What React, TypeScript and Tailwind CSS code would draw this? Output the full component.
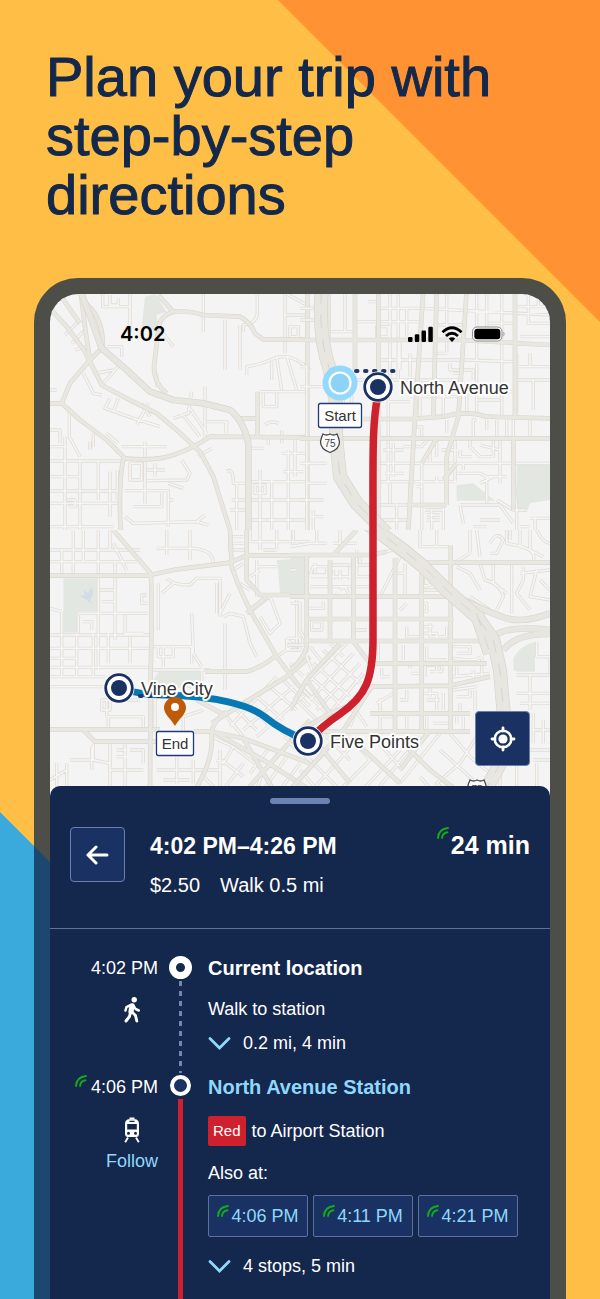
type Tile = {
  x: number;
  y: number;
  parks: string;
  minor: string;
  major: string;
  freeway: string;
  interstate: string;
};

// Street tiles are drawn at 3x and scaled down onto the map
const tiles: Tile[] = [
  {
    x: -20,
    y: -24,
    parks: "M345 80L335 175 385 182 380 135 410 125 375 72Z",
    minor:
      "M520 60V185M300 60V185M218 60V110H300M240 75V105H265V85M682 60V130Q680 160 640 165V185M765 60V250M840 135H765M780 170H805V200H780ZM650 315V290Q690 285 740 262Q790 250 840 300M740 262L755 360M770 258L800 360M725 275V330M690 365H835M700 370V410H740V370M585 150V300M630 165V300M160 310L190 370 215 375M195 310L250 300M215 345L265 290M240 385L225 415 310 445 390 470M265 385L250 425M335 400L360 440M455 430L510 500M480 415L530 490M430 445L475 430 485 365M320 465L355 400M525 350V500M588 455V490M530 455H590V490M60 573H275M60 620H150M60 663H275M60 700H270M60 770H250M105 500V780M150 570V780M118 420V500L150 560M205 570V690M240 605V740M262 600V690M60 480H90V520M60 530H110M110 690H135V710H115M275 530H410M345 515V700M300 580V630H335V580ZM285 662H415V770M310 710H395V670M350 600H405M375 580V620M455 570L480 610 470 630 350 632M415 640L460 655M285 740L310 760 500 755 525 735M500 755L535 765M430 690H415M655 635H840M655 690H840M655 750H840M690 600V780M725 630V780M775 540V780M655 535H700M590 605Q610 590 610 640H650M600 720H650M605 690H650M755 550H830M760 605H820M675 645H705V670H675ZM705 465Q720 450 745 460M620 640V780M715 505V525M755 480V520M795 505V620M770 72L840 110M60 360H80M105 195L150 150M125 220L165 180M135 240L170 230M230 230H275V260M385 170L430 230M180 515V540M190 490V530M230 490L265 520M60 90L110 60M505 560L545 535M380 350V310",
    major:
      "M60 115L110 170 165 245 215 345 290 385 380 430 440 480 510 545 550 620 600 780M90 75L150 160M155 60V90Q165 180 180 270M155 90Q225 140 218 240M180 270L215 235M180 270L120 340 95 400H60M95 400L150 450 230 510 285 565M285 565Q370 575 430 555T540 500L840 502M280 565Q265 640 272 780M385 75L430 125Q385 140 385 180L372 290Q372 340 410 370M430 125Q470 120 520 135L630 140Q660 155 675 190L700 208H840M620 445H685M683 365V500M832 60V780",
    freeway:
      "M150 60L185 150 215 235 290 300 360 365 430 390 520 400 600 420Q640 450 655 520V780",
    interstate: "",
  },
  {
    x: 250,
    y: -24,
    parks: "M470 645L520 640 585 692H470ZM650 583H750V690L690 700 680 728 650 715Z",
    minor:
      "M0 290H20V780M0 580H80M0 690H70M20 640H80M35 740H70M40 720V780M0 350H90M0 150H50M85 90V185H160M0 115H50M135 72V185M160 155H360M235 115H370L750 135M235 270H500L640 275M165 330H480M205 95H240M295 60V330M270 60V330M320 115V200M440 60V250M405 165H490M530 60V430M560 60V210M605 60V440M685 60V160H750M650 110H750M565 160H650M530 180H605M650 250V430M650 290H750M690 250V290M650 330H750M700 330V420M440 250H400M450 280V300H520V330M460 310H490M470 365H640M500 340V430M530 390H600M330 250V320M300 215V300M265 330V440M265 395H330M330 380H480M360 330V440M430 380V440M250 540H310M235 580H750M265 505V640M280 520V620M235 635H470M310 530H365L385 505M365 580V780M390 540V580M410 505V560M425 540H470M235 705H430M270 640V700M235 750H320M290 700V780M430 705V780M440 580V700M465 505V640M510 505V530L540 560H580V505M480 540V560H515M540 525L600 540M600 505V640M470 610H540L560 620H620M560 620V700M540 640L580 620M590 690L640 720H680M640 600L650 720V780M480 705H600L640 760M375 720H430M380 735H420M380 750H420M395 720V780M480 705L490 760M540 750H600M520 770H560M690 745H750M705 740V780M660 770H690M620 450V505M560 450V480M590 450V505M530 450H520V505M640 440V505M690 450V500M265 450V505M340 470H365V500M440 450V490M660 200H750M715 72V110M265 170H230V200H265ZM155 300V440M130 390V440M255 610H310M330 640V700M350 650H365M490 600V580M410 620V640",
    major:
      "M0 210H480L750 225M165 60V300M235 60V780M370 60L345 440 325 780M410 60L400 440M500 60L475 440 440 560V705M645 60V440M190 447H330L430 440Q500 420 560 440L750 445M0 505H750M365 580L410 505M430 630L470 580M320 705H440M640 505V720M85 60V210",
    freeway: "",
    interstate: "M65 60C58 150 65 230 90 300L108 400V500L120 620 170 700 260 790",
  },
  {
    x: -20,
    y: 236,
    parks: "M100 145H205V245H145V308H100ZM385 425H510V475H410L370 450ZM740 90L830 85V190H750L745 130Z",
    minor:
      "M60 60H330M60 95H320M130 0V140M205 0V420M160 0V95M95 60V140M240 0V60M255 95V330M60 315H360M60 355H360M60 412H355M60 385H140M140 310V440M190 310V440M235 310V400M300 320V400M145 250H355M210 180H255M215 215H255M285 255V310H340M145 255V310M160 275H185V300M60 235L95 245M95 245V440M60 440H225M60 470H220M250 40L290 120M410 0V75M480 0V90M380 55H490Q550 60 550 100M410 145Q430 165 480 165L500 145H570V260M385 160V300M395 190L430 160M350 195H335V220H355M485 250L490 370 515 410M515 415V480M580 260L600 250 640 260 660 340 680 380M585 280V480M370 420H540M370 350H485V400M385 350V380H430V350H400V410M600 0V60H650M660 0V35H840M690 0V60M740 0V60M790 0V35M605 20H640M605 40H640M700 60H740M680 90V200M680 110H740M660 140L690 120M630 160L660 180M610 120L640 100M655 250L720 200 750 280 720 310 690 260M800 210V350L770 330V360H810V325H770M830 200V370M740 380L800 340M560 160V250M600 190L570 250M80 780V700M235 600V560H340V600M215 510V540H240V510ZM230 560V510H330M240 640V780M285 640V780M185 650V720M120 690H200M240 720H340M300 660H340V700M260 660H290M260 680H290M60 750L110 720M110 700V780M375 600V500M370 500H400M440 680V760M490 690V760M380 720H570V660M460 600V560L520 540M400 750H480M190 640V690L240 700M545 620L610 650 580 700 560 690M590 560L640 620M620 540L680 600M650 520L720 590M680 500L760 570M720 470L800 540M760 450L840 530M600 590L740 440M640 600L790 470M680 620L830 490M575 690L640 740M610 650L700 720 680 780M720 650L660 730M770 680L700 780M810 700L750 780M570 660V780M520 740L560 780M640 700L580 780M760 620L840 660M780 400L820 440",
    major:
      "M250 0L310 70 362 130Q368 200 362 420L360 780M60 137H350L440 118 600 98 650 76H840M600 0L605 110Q640 210 680 275L740 380 800 460 840 500M650 0V150L690 195H840M650 250L710 200M525 425H650Q700 410 740 375M60 598H390M490 605H545L640 625 840 700M160 600L195 635H380M590 545Q540 580 545 620 550 690 495 780M545 580Q640 520 770 440L840 380M500 510L575 550M550 605L700 690 840 780M640 625L730 780M840 570L740 680 650 780",
    freeway: "",
    interstate: "",
  },
  {
    x: 240,
    y: 236,
    parks: "M0 82H45V190H0ZM670 420V385Q690 345 735 335V425H680Z",
    minor:
      "M60 135H110V110H70ZM120 105H240M130 120V150M150 120V150M180 110V150M200 60V140H240M60 140H240M60 170H240M75 100V130M150 180Q165 160 175 190M0 0V50L60 40H110M80 0V40M130 40H200M150 0V60M55 235H100V215M65 275V300H95V275ZM140 205V190M190 300H230M0 220H30V300L45 330M0 345H40M190 225V250M210 100V75M270 70L310 60 350 90M330 80L270 200M345 100V200M320 130H345M400 130V180H480M400 170L440 160M400 220H410V245H400M330 240L350 220M420 280V320H470V290M400 310H440V330M400 290H430M350 290V320H390M340 345V390M410 350V390H470M490 350H540V370H500M490 385Q560 395 575 380M360 415V400M365 430H390M405 400V440M410 405H455V425H420M440 405V430M500 410V440M550 420V460M575 380V440M490 440L600 430M490 480L560 470M500 500H540V480M510 520V550M555 480V540M350 480V510H330M400 490H440V540M420 470V500M410 510H450M460 490V540M350 560V600M410 560V600M430 580H480M520 560V600M500 560V580M390 0V50H480M440 0V50M540 0V70M540 70L490 100M600 40Q620 0 640 30L620 70H600M560 0L570 80M650 0V40L700 50M690 0V50Q740 60 730 90M740 0Q760 40 780 40M720 0V60L760 80M665 100V250M570 100L585 150Q630 160 640 200L620 240M500 110L540 130 570 180M540 200L600 240M610 100V160L650 190M700 110V150L680 190 720 240M740 120L720 200 780 210M690 130L780 120M750 150L780 180M680 435H780M720 435V540M680 490H780M740 380H780V430M740 380V335M690 520H780M730 550V640M760 570V640M730 600H780M560 620L510 700 440 760 500 810M480 610L540 680 600 730M450 660L550 750M400 700L480 770M390 740L450 810M590 770V810M630 730V810M680 700V810M720 660H780M730 690H780M740 700V810M100 610L180 690M170 610L240 690M240 610L330 710M60 690L150 780M30 720L100 800M130 640L0 780M210 620L40 810M250 680L120 810M330 660L190 810M390 620L260 780M450 610L330 760M0 640L60 690M100 360L210 460M70 400L180 500M50 430L150 520M30 470L120 560M10 500L80 570M170 340L50 460M190 370L60 510M210 400L80 540M220 430L110 560M230 470L140 570M120 340L160 380M60 350L100 400M50 380L70 430M190 530L230 590M210 510L180 590M270 505V600M270 560H310M260 520L310 490M660 0V30M0 120H20M265 340V390M270 440H300M275 415V440",
    major:
      "M0 75H240L290 65M50 80V350Q40 390 0 420M120 90V335M190 75V335L240 400M315 85V600M395 110V600M482 45V600M390 98H780M0 200H480M50 267H490M40 333H570M250 400H590M240 470L480 467 600 440M240 550H540M70 605H540M130 75L200 0M0 540L50 450 150 340M50 450L120 550 190 520M0 620L120 550M245 470L160 600 0 780M330 630L420 720 500 780M200 640L330 760M90 650L180 760M420 600L330 720",
    freeway: "M510 205Q600 250 650 265T780 250M610 320Q650 285 780 300M640 360Q680 310 780 312",
    interstate: "M230 -20L340 60 400 110 470 180 560 260 610 330 630 420 642 560V680L570 810M560 250L600 370",
  },
];

function Streets() {
  return (
    <>
      {tiles.map((t) => (
        <svg
          key={`${t.x}:${t.y}`}
          x={t.x}
          y={t.y}
          width="300"
          height={t.y < 0 ? 260 : 270}
          viewBox={t.y < 0 ? "0 0 900 780" : "0 0 900 810"}
          fill="none"
          strokeLinejoin="round"
        >
          <path d={t.parks} fill="#e3e7e2" />
          <path d={t.minor} stroke="#e0ddd7" strokeWidth="10" />
          <path d={t.minor} stroke="#f6f5f4" strokeWidth="5" />
          <path d={t.major} stroke="#dbd8cf" strokeWidth="14" />
          <path d={t.major} stroke="#e9e7e1" strokeWidth="10" />
          <path d={t.freeway} stroke="#d8d5cb" strokeWidth="20" />
          <path d={t.freeway} stroke="#e8e6e0" strokeWidth="16" />
          <path d={t.interstate} stroke="#d8d4ca" strokeWidth="42" />
          <path d={t.interstate} stroke="#e8e6e1" strokeWidth="38" />
          <path d={t.interstate} stroke="#cfccc5" strokeWidth="2" strokeDasharray="40 34" />
        </svg>
      ))}
    </>
  );
}

function Shield({ x, y }: { x: number; y: number }) {
  return (
    <g transform={`translate(${x} ${y})`}>
      <path
        d="M-7-9Q-3.500-7 0-9 3.500-7 7-9 9-5 9.500-1 9.500 6 0 9.500-9.500 6-9.500-1-9-5-7-9Z"
        fill="#fafafa"
        stroke="#45474a"
        strokeWidth="1.300"
      />
      <text y="4" textAnchor="middle" fontSize="10" fill="#45474a">
        75
      </text>
    </g>
  );
}

function Stop({ x, y }: { x: number; y: number }) {
  return (
    <g transform={`translate(${x} ${y})`}>
      <circle r="15.500" fill="#fff" />
      <circle r="13.300" fill="#fff" stroke="#1a3263" strokeWidth="2.800" />
      <circle r="8" fill="#1a3263" />
    </g>
  );
}

function RouteMap() {
  return (
    <svg
      className="block w-full"
      viewBox="0 0 500 506"
      role="img"
      aria-label="Route map"
      fontFamily="'Liberation Sans', Arial, sans-serif"
    >
      <rect width="500" height="506" fill="#f5f4f4" />
      <Streets />
      <path d="M33 295l5 4 4-6 1 8-3 5 2 4-5-4-7-4 5-1z" fill="#d3dbe8" />

      <path
        d="M328 100C322 130 323 160 323 236V345C323 385 316 402 290 420Q272 432 258 447"
        fill="none"
        stroke="#cf202d"
        strokeWidth="7.500"
      />
      <path
        d="M69 394Q90 401 115 401C165 402 200 411 215 423Q232 437 258 447"
        fill="none"
        stroke="#0678b4"
        strokeWidth="7"
      />
      <g stroke="#1d3768" strokeWidth="4" strokeLinecap="round" strokeDasharray="1.500 7.500">
        <path d="M306 77H346" />
        <path d="M90 402H120" />
      </g>

      <circle cx="290" cy="89" r="17.500" fill="#92d9fb" />
      <circle cx="290" cy="89" r="10.500" fill="#8dd3f8" stroke="#fff" strokeWidth="2.200" />
      <Stop x={328} y={93} />
      <Stop x={69} y={394} />
      <Stop x={258} y={447} />
      <Shield x={280} y={149} />
      <Shield x={427} y={495} />

      <path
        d="M125 432C121 425 114 420 114 414A11 11 0 0 1 136 414C136 420 129 425 125 432Z"
        fill="#bf5b08"
      />
      <circle cx="125" cy="413" r="4" fill="#fff" />

      <g fontSize="18" fill="#333" stroke="#fff" strokeWidth="4" strokeLinejoin="round" paintOrder="stroke">
        <text x="350" y="100">North Avenue</text>
        <text x="91" y="401">Vine City</text>
        <text x="280" y="454">Five Points</text>
      </g>

      <g fill="#fff" stroke="#1d3a72" strokeWidth="1.300">
        <rect x="268.500" y="109.500" width="43" height="24" rx="2" />
        <rect x="106.500" y="437.500" width="37" height="24" rx="2" />
      </g>
      <g fontSize="15" fill="#333" textAnchor="middle">
        <text x="290" y="127">Start</text>
        <text x="125" y="455">End</text>
      </g>
    </svg>
  );
}

function StatusIcons() {
  return (
    <svg className="h-4 w-[98px]" viewBox="0 0 98 16" aria-hidden>
      <rect x="0" y="11" width="4.500" height="5" rx="1.200" />
      <rect x="6.800" y="8.300" width="4.500" height="7.700" rx="1.200" />
      <rect x="13.500" y="4.500" width="4.500" height="11.500" rx="1.200" />
      <rect x="20.300" y="0.800" width="4.500" height="15.200" rx="1.200" />
      <g fill="none" stroke="#000" strokeWidth="2.800">
        <path d="M34.500 6.300Q44 -2.800 53.500 6.300" />
        <path d="M38 10Q44 4.600 50 10" />
      </g>
      <path d="M40.800 12.500Q44 10 47.200 12.500L44 16Z" />
      <rect x="64.500" y="1" width="29.500" height="14" rx="4.500" fill="#fff" stroke="#8b8b8b" />
      <rect x="66.300" y="2.800" width="26" height="10.400" rx="3" />
      <path d="M95.500 5.500Q97.500 8 95.500 10.500Z" fill="#8b8b8b" />
    </svg>
  );
}

function LiveIcon({ className = "" }: { className?: string }) {
  return (
    <svg
      className={`size-3 shrink-0 ${className}`}
      viewBox="0 0 12 12"
      fill="none"
      stroke="#10ac1b"
      strokeWidth="1.900"
      strokeLinecap="round"
      aria-hidden
    >
      <path d="M1 11Q1.500 2 11 1" />
      <path d="M5 11Q5.500 6 10.500 5.200" />
    </svg>
  );
}

function WalkIcon() {
  return (
    <svg
      className="h-[26px] w-4"
      viewBox="0 0 16 26"
      fill="none"
      stroke="#fff"
      strokeWidth="2.900"
      strokeLinecap="round"
      strokeLinejoin="round"
      aria-hidden
    >
      <circle cx="10.200" cy="2.700" r="2.700" fill="#fff" stroke="none" />
      <path d="M6.500 8L2.500 10.200 1.500 13.500M9.500 8.500L11.500 12 14.800 13.500" strokeWidth="2.500" />
      <path d="M8 8.800L7 14.500" strokeWidth="5.200" />
      <path d="M6.500 15L5.500 19.500 2 24M7.500 14.500L11.500 18.500 12.800 24" />
    </svg>
  );
}

function TrainIcon() {
  return (
    <svg className="block h-[26px] w-4" viewBox="0 0 16 26" fill="#fff" aria-hidden>
      <path d="M5.500 0.500H10.500V2.500H5.500Z" />
      <path
        fillRule="evenodd"
        d="M4 2.200H12Q15 3.500 15 7V16.500Q15 20 12 20H4Q1 20 1 16.500V7Q1 3.500 4 2.200ZM5.500 3.800V5H10.500V3.800ZM3.200 7V12.500H12.800V7ZM4.500 14.700A1.500 1.500 0 1 0 4.500 17.700 1.500 1.500 0 1 0 4.500 14.700ZM11.500 14.700A1.500 1.500 0 1 0 11.500 17.700 1.500 1.500 0 1 0 11.500 14.700Z"
      />
      <path d="M4 20.500L1.200 25.200M12 20.500L14.800 25.200" stroke="#fff" strokeWidth="1.900" />
    </svg>
  );
}

function Details({ label }: { label: string }) {
  return (
    <button className="flex items-center gap-3 text-left leading-6">
      <svg className="h-[13px] w-[23px]" viewBox="0 0 23 13" fill="none" aria-hidden>
        <path d="M2 1.500L11.500 11 21 1.500" stroke="#90d8fb" strokeWidth="2.800" strokeLinecap="round" />
      </svg>
      {label}
    </button>
  );
}

const departures = ["4:06 PM", "4:11 PM", "4:21 PM"];

export default function App() {
  return (
    <div className="relative flex min-h-screen flex-col overflow-hidden bg-[#ffbe45] font-['Liberation_Sans',Arial,sans-serif]">
      {/* Backdrop */}
      <div
        aria-hidden
        className="absolute top-0 right-0 size-[322px] bg-[#ff9232] [clip-path:polygon(0_0,100%_0,100%_100%)]"
      />
      <div
        aria-hidden
        className="absolute top-[812px] left-0 size-[487px] bg-[#3aa9dc] [clip-path:polygon(0_0,100%_100%,0_100%)]"
      />

      <h1 className="relative max-w-[560px] px-[46px] pt-[47px] text-[56px] leading-[59px] text-[#13284b] [-webkit-text-stroke:1px_#13284b]">
        Plan your trip with step-by-step directions
      </h1>

      {/* Phone */}
      <div className="relative mx-[34px] mt-[54px] flex flex-1 flex-col rounded-t-[44px] bg-[#13284b]/75 px-4 pt-4">
        <div className="flex flex-1 flex-col overflow-hidden rounded-t-[28px] bg-[#14274d]">
          <div className="relative">
            <RouteMap />
            <div className="absolute inset-x-0 top-0 flex items-center justify-between pt-[26px] pr-11 pl-[70px]">
              <span className="font-['Inter',sans-serif] text-xl font-semibold">4:02</span>
              <StatusIcons />
            </div>
            <button
              aria-label="Center on my location"
              className="absolute right-5 bottom-[34px] flex size-[55px] items-center justify-center rounded-[4px] border border-[#6b80ab] bg-[#1a3263]"
            >
              <svg className="size-[26px]" viewBox="0 0 26 26" fill="none" stroke="#fff" aria-hidden>
                <circle cx="13" cy="13" r="8.300" strokeWidth="2.600" />
                <circle cx="13" cy="13" r="4.600" fill="#fff" stroke="none" />
                <path d="M13 2V5M13 21V24M2 13H5M21 13H24" strokeWidth="2.800" strokeLinecap="round" />
              </svg>
            </button>
          </div>

          {/* Trip sheet */}
          <section className="relative -mt-3.5 flex flex-1 flex-col rounded-t-[10px] bg-[#14274d] text-lg text-white">
            <div className="mx-auto mt-3 h-1.5 w-[60px] rounded-full bg-[#6b83b0]" />
            <header className="flex border-b border-[#5d7199] px-5 pt-[23px] pb-[29px]">
              <button
                aria-label="Back"
                className="flex size-[55px] items-center justify-center rounded-[4px] border border-[#6b80ab] bg-[#1a3263]"
              >
                <svg
                  className="h-5 w-[23px]"
                  viewBox="0 0 23 20"
                  fill="none"
                  stroke="#fff"
                  strokeWidth="3"
                  strokeLinecap="round"
                  strokeLinejoin="round"
                  aria-hidden
                >
                  <path d="M21 10H2M10 2L2 10 10 18" />
                </svg>
              </button>
              <div className="ml-[25px] pt-1">
                <h2 className="text-[23px] leading-[30px] font-bold">4:02 PM–4:26 PM</h2>
                <p className="mt-2.5 flex gap-5 text-xl leading-7">
                  <span>$2.50</span>
                  <span>Walk 0.5 mi</span>
                </p>
              </div>
              <div className="ml-auto flex gap-0.5 text-[25px] leading-9 font-bold">
                <LiveIcon />
                24 min
              </div>
            </header>

            <ol className="flex flex-1 flex-col pt-[27px]">
              <li className="flex">
                <div className="flex w-[108px] flex-col items-end">
                  <time className="leading-6">4:02 PM</time>
                  <span className="mt-[17px] mr-[18px]">
                    <WalkIcon />
                  </span>
                </div>
                <div className="mx-2.5 flex w-6 flex-col items-center">
                  <span className="size-[23px] rounded-full border-[7px] border-white" />
                  <span className="my-0.5 w-[3px] flex-1 bg-[repeating-linear-gradient(#7186b0_0_5px,transparent_5px_10px)]" />
                </div>
                <div className="ml-1.5 flex h-[119px] flex-col items-start">
                  <h3 className="text-xl leading-6 font-bold">Current location</h3>
                  <p className="mt-[17px] mb-2.5 leading-6">Walk to station</p>
                  <Details label="0.2 mi, 4 min" />
                </div>
              </li>

              <li className="flex flex-1">
                <div className="flex w-[108px] flex-col items-end">
                  <time className="flex gap-1 leading-6">
                    <LiveIcon />
                    4:06 PM
                  </time>
                  <span className="mt-[18px] mr-[18px]">
                    <TrainIcon />
                  </span>
                  <button className="mt-1.5 leading-6 text-[#90d8fb]">Follow</button>
                </div>
                <div className="mx-2.5 flex w-6 flex-col items-center">
                  <span className="size-[21px] rounded-full border-4 border-white bg-[#1a3263]" />
                  <span className="mt-[3px] w-[5px] flex-1 bg-[#cf202d]" />
                </div>
                <div className="ml-1.5 flex flex-col items-start pb-5">
                  <h3 className="text-xl leading-6 font-bold text-[#90d8fb]">North Avenue Station</h3>
                  <p className="mt-[17px] flex items-center gap-1.5">
                    <span className="rounded-xs bg-[#cf202d] px-[5px] text-[15px] leading-[30px]">Red</span>
                    to Airport Station
                  </p>
                  <p className="mt-[15px] leading-6">Also at:</p>
                  <div className="mt-2.5 flex gap-[5px]">
                    {departures.map((time) => (
                      <button
                        key={time}
                        className="flex h-[42px] w-[100px] items-center justify-center gap-0.5 rounded-xs border border-[#5d7199] bg-[#1a3263] text-[#90d8fb]"
                      >
                        <LiveIcon className="mb-2.5" />
                        {time}
                      </button>
                    ))}
                  </div>
                  <div className="mt-[17px]">
                    <Details label="4 stops, 5 min" />
                  </div>
                </div>
              </li>
            </ol>
          </section>
        </div>
      </div>
    </div>
  );
}
